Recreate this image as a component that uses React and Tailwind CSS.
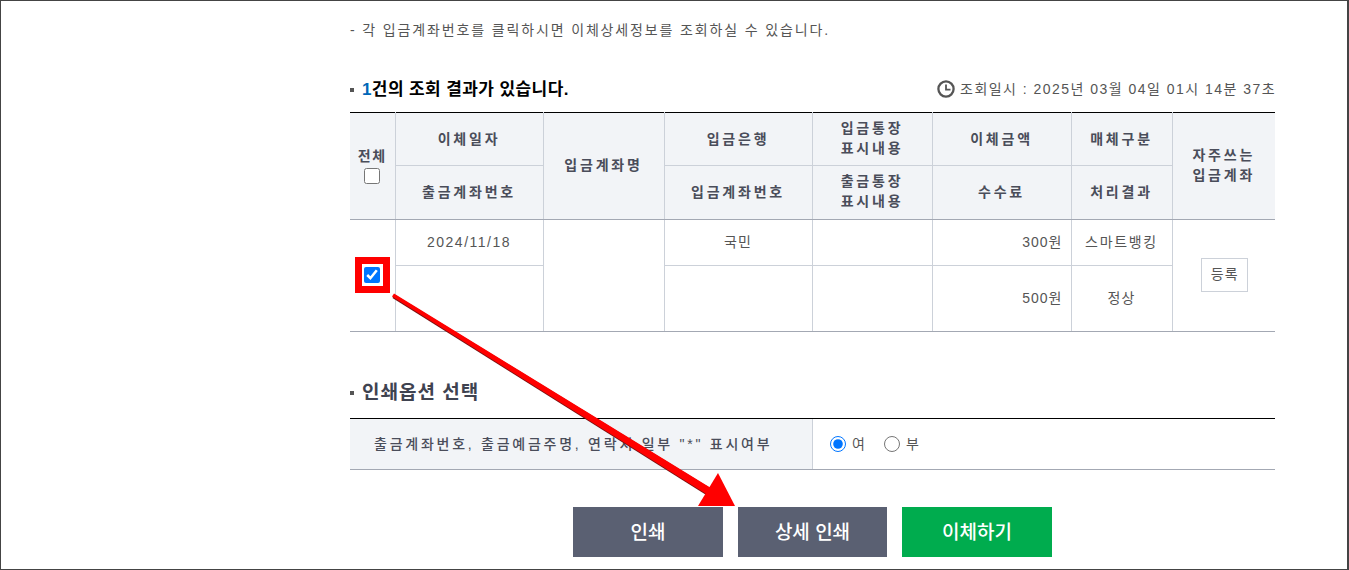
const thBase = 'bg-[#f2f4f7] border border-[#ccd1d9] text-[14px] font-bold text-[#4a4d5a] tracking-[2.8px] leading-[20px] text-center align-middle';
const tdBase = 'border border-[#ccd1d9] text-[14px] text-[#555] tracking-[1px] text-center align-middle';

const SectionTitle = ({ children, className }) => (
  <div className={`flex items-center ${className}`}>
    <span className="w-[4px] h-[4px] bg-[#555] mr-[8px]"></span>
    {children}
  </div>
);

const ClockIcon = () => (
  <svg width="18" height="18" viewBox="0 0 18 18" fill="none" stroke="#555" strokeWidth="2.3" className="mr-[5px] mt-[-1px]">
    <circle cx="9" cy="9" r="7.6" />
    <path d="M9 4.5V9.6H13.5" strokeWidth="1.8" />
  </svg>
);

const Arrow = () => (
  <svg className="absolute left-0 top-0 pointer-events-none" width="1349" height="570" viewBox="0 0 1349 570">
    <polygon points="393.5,293.5 391.5,297 710,497 714,490" fill="#7a1010" />
    <polygon points="393,292.5 391,295.5 710,496 714,489.5" fill="#ff0000" />
    <polygon points="697,505 734,505 717,472" fill="#ff0000" />
  </svg>
);

export default function App() {
  return (
    <div className="relative w-[1349px] h-[570px] overflow-hidden bg-white border border-[#444] border-r-2 font-['Liberation_Sans','Noto_Sans_CJK_KR',sans-serif]">
      <div className="w-[925px] ml-[349px]">
        <p className="pt-[19px] h-[60px] text-[14px] leading-[20px] tracking-[1.86px] text-[#555]">
          - 각 입금계좌번호를 클릭하시면 이체상세정보를 조회하실 수 있습니다.
        </p>

        <div className="flex items-center justify-between h-[51px] pt-[6px]">
          <SectionTitle>
            <h2 className="text-[17px] font-bold text-black tracking-[0.4px]">
              <span className="text-[#0067b8]">1</span>건의 조회 결과가 있습니다.
            </h2>
          </SectionTitle>
          <div className="flex items-center text-[14px] text-[#555] tracking-[1.47px] mr-[-1px]">
            <ClockIcon />
            조회일시 : 2025년 03월 04일 01시 14분 37초
          </div>
        </div>

        <table className="w-[925px] table-fixed border-collapse border-t border-t-black">
          <colgroup>
            <col className="w-[45px]" />
            <col className="w-[148px]" />
            <col className="w-[121px]" />
            <col className="w-[148px]" />
            <col className="w-[120px]" />
            <col className="w-[139px]" />
            <col className="w-[101px]" />
            <col className="w-[103px]" />
          </colgroup>
          <thead>
            <tr className="h-[53px]">
              <th rowSpan={2} className={`${thBase} border-l-0 border-t-black !tracking-[1.5px] border-b-[#a3a8b3] pb-[2px]`}>
                전체
                <input type="checkbox" className="block mx-auto mt-[2px] w-[16px] h-[16px]" />
              </th>
              <th className={`${thBase} border-t-black`}>이체일자</th>
              <th rowSpan={2} className={`${thBase} border-t-black border-b-[#a3a8b3] pb-[2px]`}>입금계좌명</th>
              <th className={`${thBase} border-t-black`}>입금은행</th>
              <th className={`${thBase} border-t-black pb-[2px]`}>입금통장<br />표시내용</th>
              <th className={`${thBase} border-t-black`}>이체금액</th>
              <th className={`${thBase} border-t-black`}>매체구분</th>
              <th rowSpan={2} className={`${thBase} border-r-0 border-t-black border-b-[#a3a8b3] pb-[2px]`}>자주쓰는<br />입금계좌</th>
            </tr>
            <tr className="h-[54px]">
              <th className={`${thBase} border-b-[#a3a8b3] pb-[2px]`}>출금계좌번호</th>
              <th className={`${thBase} border-b-[#a3a8b3] pb-[2px]`}>입금계좌번호</th>
              <th className={`${thBase} border-b-[#a3a8b3] pb-[3px]`}>출금통장<br />표시내용</th>
              <th className={`${thBase} border-b-[#a3a8b3] pb-[2px]`}>수수료</th>
              <th className={`${thBase} border-b-[#a3a8b3] pb-[2px]`}>처리결과</th>
            </tr>
          </thead>
          <tbody>
            <tr className="h-[46px]">
              <td rowSpan={2} className={`${tdBase} border-l-0 border-b-[#a3a8b3]`}>
                <span className="inline-flex w-[35px] h-[36px] items-center justify-center border-[7px] border-[#ff0000] bg-white align-middle mt-[-1px]">
                  <input type="checkbox" defaultChecked className="block m-0 w-[16px] h-[16px]" />
                </span>
              </td>
              <td className={`${tdBase} !tracking-[1.5px]`}>2024/11/18</td>
              <td rowSpan={2} className={`${tdBase} border-b-[#a3a8b3]`}></td>
              <td className={tdBase}>국민</td>
              <td className={tdBase}></td>
              <td className={`${tdBase} !text-right pr-[8px]`}>300원</td>
              <td className={`${tdBase} !tracking-[1.7px]`}>스마트뱅킹</td>
              <td rowSpan={2} className={`${tdBase} border-r-0 border-b-[#a3a8b3]`}>
                <button className="w-[47px] h-[34px] mt-[-2px] ml-[2px] border border-[#ccd1d9] bg-white text-[14px] text-[#555] tracking-[1px]">등록</button>
              </td>
            </tr>
            <tr className="h-[66px]">
              <td className={`${tdBase} border-b-[#a3a8b3]`}></td>
              <td className={`${tdBase} border-b-[#a3a8b3]`}></td>
              <td className={`${tdBase} border-b-[#a3a8b3]`}></td>
              <td className={`${tdBase} border-b-[#a3a8b3] !text-right pr-[8px]`}>500원</td>
              <td className={`${tdBase} border-b-[#a3a8b3]`}>정상</td>
            </tr>
          </tbody>
        </table>

        <SectionTitle className="mt-[48px] h-[26px]">
          <h2 className="text-[19px] font-bold text-[#3f4350] tracking-[1px]">인쇄옵션 선택</h2>
        </SectionTitle>

        <div className="flex h-[52px] mt-[12px] border-t border-t-black border-b border-b-[#a3a8b3]">
          <div className="w-[463px] flex items-center pl-[24px] bg-[#f2f4f7] border-r border-r-[#ccd1d9] text-[14px] font-medium text-[#4a4d5a] tracking-[2.75px]">
            출금계좌번호, 출금예금주명, 연락처 일부 "*" 표시여부
          </div>
          <div className="flex items-center pl-[17px] text-[14px] text-[#555]">
            <input type="radio" name="mask" defaultChecked className="m-0 w-[16px] h-[16px]" />
            <span className="ml-[6px] mr-[19px]">여</span>
            <input type="radio" name="mask" className="m-0 w-[16px] h-[16px]" />
            <span className="ml-[6px]">부</span>
          </div>
        </div>

        <div className="flex justify-center gap-[15px] mt-[37px]">
          <button className="w-[150px] h-[50px] pt-[3px] bg-[#5a6072] text-white text-[19px] font-medium">인쇄</button>
          <button className="w-[149px] h-[50px] pt-[3px] bg-[#5a6072] text-white text-[19px] font-medium">상세 인쇄</button>
          <button className="w-[150px] h-[50px] pt-[3px] bg-[#00ac4e] text-white text-[19px] font-medium">이체하기</button>
        </div>
      </div>
      <Arrow />
    </div>
  );
}
